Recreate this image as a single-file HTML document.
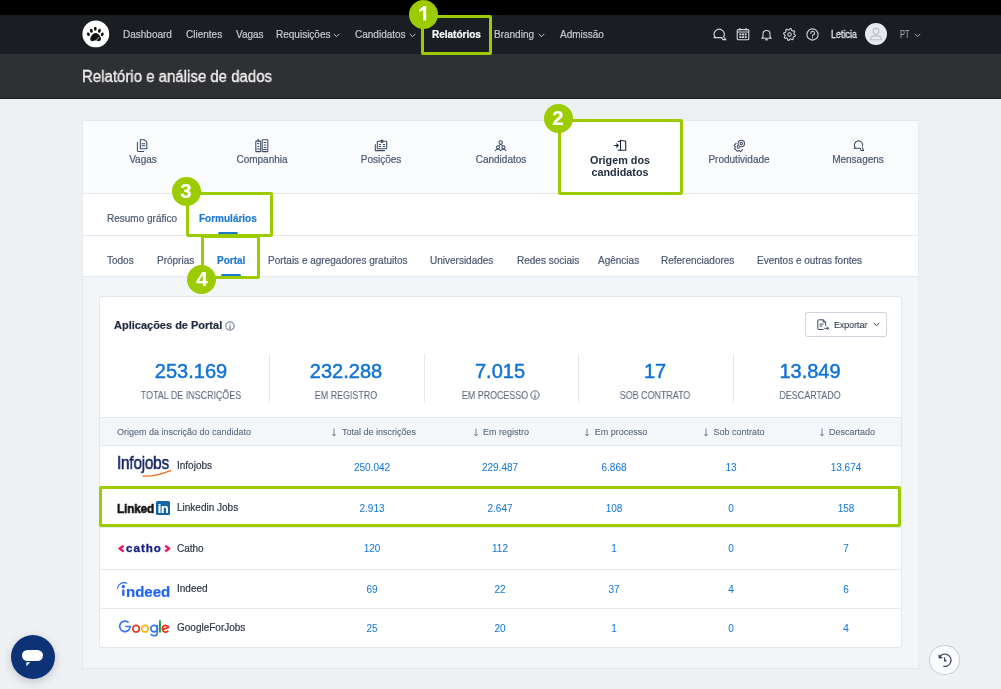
<!DOCTYPE html>
<html><head><meta charset="utf-8"><style>
html,body{margin:0;padding:0;}
body{width:1001px;height:689px;overflow:hidden;position:relative;background:#eef1f4;font-family:"Liberation Sans",sans-serif;}
.t{position:absolute;white-space:nowrap;line-height:1;will-change:transform;-webkit-text-stroke:0.2px currentColor;}
.b{position:absolute;}
svg.b{overflow:visible;}
</style></head><body>
<div class="b" style="left:0px;top:0px;width:1001px;height:15px;background:#000;"></div>
<div class="b" style="left:0px;top:15px;width:1001px;height:39px;background:#1a1e22;"></div>
<div class="b" style="left:0px;top:54px;width:1001px;height:44px;background:#2f3033;"></div>
<div class="b" style="left:0px;top:98px;width:1001px;height:1px;background:#1b1c1e;"></div>
<svg class="b" style="left:82px;top:20px" width="28" height="28" viewBox="0 0 28 28"><circle cx="13.8" cy="13.9" r="13.4" fill="#fff"/><g fill="#111"><ellipse cx="6.4" cy="14.2" rx="1.35" ry="1.85" transform="rotate(-30 6.4 14.2)"/><ellipse cx="9.35" cy="10.8" rx="1.45" ry="2.0" transform="rotate(-15 9.35 10.8)"/><ellipse cx="13.3" cy="8.8" rx="1.4" ry="2.05"/><ellipse cx="17.4" cy="10.8" rx="1.45" ry="2.0" transform="rotate(15 17.4 10.8)"/><ellipse cx="20.3" cy="14.4" rx="1.35" ry="1.85" transform="rotate(30 20.3 14.4)"/><path d="M13.4 13.1 C15.6 13.1 17.6 15 18.6 17.3 C19.4 19.2 18.9 21.2 16.9 21.2 C15.6 21.2 14.8 20.6 13.6 20.6 C12.2 20.6 11.3 21.4 10 21.3 C8.3 21.2 7.8 19.5 8.6 17.6 C9.5 15.3 11.3 13.1 13.4 13.1 Z"/></g><path d="M14.3 20.3 L16.8 17.6" stroke="#fff" stroke-width="0.7" stroke-linecap="round"/></svg>
<div class="t" style="left:123.0px;top:30.13px;font-size:10px;color:#c5c9cf;">Dashboard</div>
<div class="t" style="left:186.0px;top:30.13px;font-size:10px;color:#c5c9cf;">Clientes</div>
<div class="t" style="left:236.0px;top:30.13px;font-size:10px;color:#c5c9cf;">Vagas</div>
<div class="t" style="left:276.4px;top:30.13px;font-size:10px;color:#c5c9cf;">Requisições</div>
<div class="t" style="left:354.7px;top:30.13px;font-size:10px;color:#c5c9cf;">Candidatos</div>
<div class="t" style="left:431.5px;top:30.13px;font-size:10px;color:#ffffff;font-weight:700;">Relatórios</div>
<div class="t" style="left:494.2px;top:30.13px;font-size:10px;color:#c5c9cf;">Branding</div>
<div class="t" style="left:560.0px;top:30.13px;font-size:10px;color:#c5c9cf;">Admissão</div>
<svg class="b" style="left:333px;top:33px" width="7" height="5" viewBox="0 0 7 5"><path d="M1 1.2 L3.5 3.7 L6 1.2" fill="none" stroke="#c5c9cf" stroke-width="1" stroke-linecap="round" stroke-linejoin="round"/></svg>
<svg class="b" style="left:409.3px;top:33px" width="7" height="5" viewBox="0 0 7 5"><path d="M1 1.2 L3.5 3.7 L6 1.2" fill="none" stroke="#c5c9cf" stroke-width="1" stroke-linecap="round" stroke-linejoin="round"/></svg>
<svg class="b" style="left:538.3px;top:33px" width="7" height="5" viewBox="0 0 7 5"><path d="M1 1.2 L3.5 3.7 L6 1.2" fill="none" stroke="#c5c9cf" stroke-width="1" stroke-linecap="round" stroke-linejoin="round"/></svg>
<svg class="b" style="left:712px;top:27px" width="15" height="15" viewBox="0 0 15 15"><g fill="none" stroke="#d4d7dc" stroke-width="1.1" stroke-linecap="round"><path d="M3.2 10.3 A5 5 0 1 1 11.5 9.8"/><path d="M2 10.6 H9.8 L11 12.6 H13.8 L12.3 10.5"/></g></svg>
<svg class="b" style="left:736px;top:26.5px" width="14" height="14" viewBox="0 0 14 14"><g fill="none" stroke="#d4d7dc" stroke-width="1.1"><rect x="1.2" y="2.6" width="11.6" height="10.2" rx="1"/><path d="M4 1 V3.5 M10 1 V3.5 M1.2 5 H12.8"/></g><g fill="#d4d7dc"><rect x="3.3" y="6.5" width="2" height="1.8"/><rect x="6" y="6.5" width="2" height="1.8"/><rect x="8.7" y="6.5" width="2" height="1.8"/><rect x="3.3" y="9.2" width="2" height="1.8"/><rect x="6" y="9.2" width="2" height="1.8"/><rect x="8.7" y="9.2" width="2" height="1.8"/></g></svg>
<svg class="b" style="left:759.5px;top:27.5px" width="13" height="13" viewBox="0 0 13 13"><g fill="none" stroke="#d4d7dc" stroke-width="1.1" stroke-linejoin="round"><path d="M3 9 V6 A3.5 3.5 0 0 1 10 6 V9 L11.3 10.3 H1.7 Z"/><path d="M5 11.8 H8"/></g></svg>
<svg class="b" style="left:782.5px;top:27.5px" width="13" height="13" viewBox="0 0 13 13"><polygon points="12.37,7.09 12.14,8.22 10.55,8.68 10.05,9.42 10.23,11.07 9.27,11.71 7.83,10.90 6.94,11.08 5.91,12.37 4.78,12.14 4.32,10.55 3.58,10.05 1.93,10.23 1.29,9.27 2.10,7.83 1.92,6.94 0.63,5.91 0.86,4.78 2.45,4.32 2.95,3.58 2.77,1.93 3.73,1.29 5.17,2.10 6.06,1.92 7.09,0.63 8.22,0.86 8.68,2.45 9.42,2.95 11.07,2.77 11.71,3.73 10.90,5.17 11.08,6.06" fill="none" stroke="#d4d7dc" stroke-width="1.05" stroke-linejoin="round"/><circle cx="6.5" cy="6.5" r="1.7" fill="none" stroke="#d4d7dc" stroke-width="1.05"/></svg>
<svg class="b" style="left:806px;top:27.5px" width="13" height="13" viewBox="0 0 13 13"><circle cx="6.5" cy="6.5" r="5.6" fill="none" stroke="#d4d7dc" stroke-width="1.1"/><path d="M4.7 5.2 A1.9 1.9 0 1 1 7.2 7 C6.7 7.3 6.5 7.6 6.5 8.3" fill="none" stroke="#d4d7dc" stroke-width="1.1" stroke-linecap="round"/><circle cx="6.5" cy="9.9" r="0.7" fill="#d4d7dc"/></svg>
<div class="t" style="left:831.0px;top:30.13px;font-size:10px;color:#e6e8ec;transform-origin:0 50%;transform: scaleX(0.9);-webkit-text-stroke:0.3px #e6e8ec;">Leticia</div>
<svg class="b" style="left:864.7px;top:23.2px" width="22" height="22" viewBox="0 0 22 22"><circle cx="11" cy="11" r="11" fill="#e6e9ee"/><circle cx="11" cy="8.3" r="2.9" fill="none" stroke="#b9c0cb" stroke-width="1.1"/><path d="M5.3 16.8 C5.6 13.5 8 12.6 11 12.6 C14 12.6 16.4 13.5 16.7 16.8 Z" fill="none" stroke="#b9c0cb" stroke-width="1.1" stroke-linejoin="round"/></svg>
<div class="t" style="left:900.3px;top:30.13px;font-size:10px;color:#a3a8ae;transform-origin:0 50%;transform: scaleX(0.74);">PT</div>
<svg class="b" style="left:913.7px;top:33px" width="7" height="5" viewBox="0 0 7 5"><path d="M1 1.2 L3.5 3.7 L6 1.2" fill="none" stroke="#a3a8ae" stroke-width="1" stroke-linecap="round" stroke-linejoin="round"/></svg>
<div class="t" style="left:81.8px;top:68.65px;font-size:16px;color:#f4f4f4;transform-origin:0 50%;transform: scaleX(0.937);-webkit-text-stroke:0.3px #f4f4f4;">Relatório e análise de dados</div>
<div class="b" style="left:83px;top:121px;width:835px;height:547px;background:#f3f6f9;box-shadow:0 0 0 1px #e6eaef;"></div>
<div class="b" style="left:83px;top:121px;width:835px;height:72px;background:#fafbfc;"></div>
<div class="b" style="left:83px;top:193px;width:835px;height:1px;background:#e4e8ee;"></div>
<div class="b" style="left:83px;top:194px;width:835px;height:41px;background:#fff;"></div>
<div class="b" style="left:83px;top:235px;width:835px;height:1px;background:#e4e8ee;"></div>
<div class="b" style="left:83px;top:236px;width:835px;height:40px;background:#fff;"></div>
<div class="b" style="left:83px;top:276px;width:835px;height:1px;background:#e4e8ee;"></div>
<div class="b" style="left:561px;top:121px;width:119.3px;height:72px;background:#fff;"></div>
<div class="t" style="left:142.6px;top:155.13px;font-size:10px;color:#4b5873;transform:translateX(-50%);">Vagas</div>
<div class="t" style="left:261.9px;top:155.13px;font-size:10px;color:#4b5873;transform:translateX(-50%);">Companhia</div>
<div class="t" style="left:381.2px;top:155.13px;font-size:10px;color:#4b5873;transform:translateX(-50%);">Posições</div>
<div class="t" style="left:500.5px;top:155.13px;font-size:10px;color:#4b5873;transform:translateX(-50%);">Candidatos</div>
<div class="t" style="left:739.1px;top:155.13px;font-size:10px;color:#4b5873;transform:translateX(-50%);">Produtividade</div>
<div class="t" style="left:858.4px;top:155.13px;font-size:10px;color:#4b5873;transform:translateX(-50%);">Mensagens</div>
<div class="t" style="left:620.2px;top:154.86px;font-size:10.8px;color:#1f2a40;font-weight:700;transform:translateX(-50%);-webkit-text-stroke:0px;">Origem dos</div>
<div class="t" style="left:620.2px;top:166.56px;font-size:10.8px;color:#1f2a40;font-weight:700;transform:translateX(-50%);-webkit-text-stroke:0px;">candidatos</div>
<svg class="b" style="left:134px;top:136px" width="18" height="18" viewBox="0 0 18 18"><g fill="none" stroke="#3d4a63" stroke-width="1.05" stroke-linecap="round" stroke-linejoin="round"><path d="M3.4 6.3 V14.6 Q3.4 15.4 4.2 15.4 H9.7"/><path d="M6.3 3.8 H10.4 L12.8 6.2 V12.7 H6.3 Z"/><path d="M8 7.7 H10.9 M8 9.7 H10.9"/></g></svg>
<svg class="b" style="left:252px;top:136px" width="18" height="18" viewBox="0 0 18 18"><g fill="none" stroke="#3d4a63" stroke-width="1.05" stroke-linecap="round" stroke-linejoin="round"><rect x="3.8" y="5.1" width="4.9" height="10.5" rx="0.6"/><path d="M6.25 3.3 V5.1"/><rect x="10.2" y="3.8" width="5.6" height="11.8" rx="0.6"/><path d="M5.6 7.6 H6.8 M5.6 10.5 H6.8 M12.2 6.4 H13.8 M12.2 9 H13.8 M12.2 11.5 H13.8 M5 13 H7.5 M11.5 13.5 H14.5"/></g></svg>
<svg class="b" style="left:371px;top:136px" width="18" height="18" viewBox="0 0 18 18"><g fill="none" stroke="#3d4a63" stroke-width="1.05" stroke-linecap="round" stroke-linejoin="round"><path d="M4.3 8.4 V14.6 H13.6"/><rect x="6.3" y="5.3" width="9.4" height="7.5" rx="0.8"/><circle cx="11" cy="5.3" r="1.2"/><path d="M8.4 8.4 H9.6 M12.3 8.4 H13.7 M8.4 10.4 H9.8 M12.3 10.4 H13.7"/></g></svg>
<svg class="b" style="left:491px;top:136px" width="18" height="18" viewBox="0 0 18 18"><g fill="none" stroke="#3d4a63" stroke-width="1.05" stroke-linecap="round" stroke-linejoin="round"><circle cx="9.7" cy="6.5" r="1.7"/><path d="M8 9.4 L9.7 8.4 L11.4 9.4"/><circle cx="7" cy="11.3" r="1.5"/><circle cx="12.4" cy="11.3" r="1.5"/><path d="M4.3 14.8 Q5 13.2 7 13.2 Q9 13.2 9.7 14.8 Q10.4 13.2 12.4 13.2 Q14.4 13.2 15 14.8"/></g></svg>
<svg class="b" style="left:611px;top:136px" width="18" height="18" viewBox="0 0 18 18"><g fill="none" stroke="#1f2a40" stroke-width="1.1" stroke-linecap="round" stroke-linejoin="round"><path d="M7.2 5.5 H9.5 M7.2 14.3 H9.5"/><path d="M9.5 4.2 L14.7 5.3 V14.3 H9.5 Z"/><path d="M3.3 9.5 H7.3 M5.6 7.8 L7.3 9.5 L5.6 11.2"/></g></svg>
<svg class="b" style="left:730px;top:136px" width="18" height="18" viewBox="0 0 18 18"><g fill="none" stroke="#3d4a63" stroke-width="1.05" stroke-linecap="round" stroke-linejoin="round"><circle cx="11.3" cy="7.5" r="3.2"/><circle cx="11.3" cy="7.5" r="1.2"/><path d="M6.2 7.2 L4.2 9.3 L5.4 10.8 L4.6 12.6 L7.4 15.3 L9.3 14.5 L10.7 15.6 L12.6 13.7"/><path d="M7.4 9.5 V12 H9.8"/></g></svg>
<svg class="b" style="left:849px;top:136px" width="18" height="18" viewBox="0 0 18 18"><g fill="none" stroke="#3d4a63" stroke-width="1.05" stroke-linecap="round" stroke-linejoin="round"><path d="M6.2 11.6 A4.2 4.2 0 1 1 13.6 10.2"/><path d="M5 12.3 H11 L12.2 14.4 H14.6 L13.3 11.8"/></g></svg>
<div class="t" style="left:107.4px;top:213.93px;font-size:10px;color:#4b5873;">Resumo gráfico</div>
<div class="t" style="left:199.2px;top:214.03px;font-size:10px;color:#1d7ad0;font-weight:700;">Formulários</div>
<div class="b" style="left:218px;top:232.3px;width:20px;height:2.7px;background:#1d7ad0;border-radius:2px;"></div>
<div class="t" style="left:107.0px;top:255.93px;font-size:10px;color:#4b5873;">Todos</div>
<div class="t" style="left:156.6px;top:255.93px;font-size:10px;color:#4b5873;">Próprias</div>
<div class="t" style="left:216.7px;top:255.93px;font-size:10px;color:#1d7ad0;font-weight:700;">Portal</div>
<div class="t" style="left:268.2px;top:255.93px;font-size:10px;color:#4b5873;">Portais e agregadores gratuitos</div>
<div class="t" style="left:430.1px;top:255.93px;font-size:10px;color:#4b5873;">Universidades</div>
<div class="t" style="left:516.5px;top:255.93px;font-size:10px;color:#4b5873;">Redes sociais</div>
<div class="t" style="left:598.3px;top:255.93px;font-size:10px;color:#4b5873;">Agências</div>
<div class="t" style="left:661.3px;top:255.93px;font-size:10px;color:#4b5873;">Referenciadores</div>
<div class="t" style="left:756.8px;top:255.93px;font-size:10px;color:#4b5873;">Eventos e outras fontes</div>
<div class="b" style="left:221.3px;top:274.3px;width:19.8px;height:2.5px;background:#1d7ad0;border-radius:2px;"></div>
<div class="b" style="left:100px;top:297px;width:801px;height:350px;background:#fff;box-shadow:0 0 0 1px #e3e8ee;border-radius:2px;"></div>
<div class="t" style="left:114.3px;top:320.09px;font-size:11px;color:#1f2a40;font-weight:700;">Aplicações de Portal</div>
<svg class="b" style="left:225px;top:320.5px" width="10" height="10" viewBox="0 0 10 10"><circle cx="5" cy="5" r="4.2" fill="none" stroke="#4b5873" stroke-width="0.9"/><path d="M5 4.4 V7.2 M4.2 7.2 H5.8" stroke="#4b5873" stroke-width="0.9" fill="none"/><circle cx="5" cy="3" r="0.6" fill="#4b5873"/></svg>
<div class="b" style="left:805.3px;top:312px;width:81.6px;height:24.8px;background:#fff;box-shadow:inset 0 0 0 1px #cfd6df;border-radius:3px;"></div>
<svg class="b" style="left:816.5px;top:318.5px" width="13" height="12" viewBox="0 0 13 12"><g fill="none" stroke="#3d4a63" stroke-width="1" stroke-linecap="round" stroke-linejoin="round"><path d="M8.6 6.3 V3.1 L6.3 0.8 H1.9 Q0.8 0.8 0.8 1.9 V9.4 Q0.8 10.5 1.9 10.5 H6.2"/><path d="M6.2 0.9 V3.1 H8.5"/><path d="M2.9 5.1 H6 M2.9 7.1 H4.8"/><path d="M7.6 9.3 H11.5 M10.1 7.9 L11.5 9.3 L10.1 10.7"/></g></svg>
<div class="t" style="left:834.0px;top:319.96px;font-size:9.5px;color:#2f3746;transform-origin:0 50%;transform: scaleX(0.93);-webkit-text-stroke:0.1px currentColor;">Exportar</div>
<svg class="b" style="left:872.5px;top:322.2px" width="7" height="5" viewBox="0 0 7 5"><path d="M1 1.2 L3.5 3.7 L6 1.2" fill="none" stroke="#2f3746" stroke-width="1.0" stroke-linecap="round" stroke-linejoin="round"/></svg>
<div class="t" style="left:190.5px;top:360.67px;font-size:20px;color:#0f73d6;transform:translateX(-50%);-webkit-text-stroke:0.45px #0f73d6;">253.169</div>
<div class="t" style="left:345.9px;top:360.67px;font-size:20px;color:#0f73d6;transform:translateX(-50%);-webkit-text-stroke:0.45px #0f73d6;">232.288</div>
<div class="t" style="left:500.2px;top:360.67px;font-size:20px;color:#0f73d6;transform:translateX(-50%);-webkit-text-stroke:0.45px #0f73d6;">7.015</div>
<div class="t" style="left:655.2px;top:360.67px;font-size:20px;color:#0f73d6;transform:translateX(-50%);-webkit-text-stroke:0.45px #0f73d6;">17</div>
<div class="t" style="left:810.0px;top:360.67px;font-size:20px;color:#0f73d6;transform:translateX(-50%);-webkit-text-stroke:0.45px #0f73d6;">13.849</div>
<div class="t" style="left:190.5px;top:390.11px;font-size:10.5px;color:#5a667a;transform-origin:50% 50%;transform:translateX(-50%) scaleX(0.85);-webkit-text-stroke:0.05px currentColor;">TOTAL DE INSCRIÇÕES</div>
<div class="t" style="left:345.9px;top:390.11px;font-size:10.5px;color:#5a667a;transform-origin:50% 50%;transform:translateX(-50%) scaleX(0.85);-webkit-text-stroke:0.05px currentColor;">EM REGISTRO</div>
<div class="t" style="left:494.7px;top:390.11px;font-size:10.5px;color:#5a667a;transform-origin:50% 50%;transform:translateX(-50%) scaleX(0.85);-webkit-text-stroke:0.05px currentColor;">EM PROCESSO</div>
<div class="t" style="left:655.2px;top:390.11px;font-size:10.5px;color:#5a667a;transform-origin:50% 50%;transform:translateX(-50%) scaleX(0.85);-webkit-text-stroke:0.05px currentColor;">SOB CONTRATO</div>
<div class="t" style="left:810.0px;top:390.11px;font-size:10.5px;color:#5a667a;transform-origin:50% 50%;transform:translateX(-50%) scaleX(0.85);-webkit-text-stroke:0.05px currentColor;">DESCARTADO</div>
<svg class="b" style="left:529.5px;top:389.5px" width="10" height="10" viewBox="0 0 10 10"><circle cx="5" cy="5" r="4.2" fill="none" stroke="#4b5873" stroke-width="0.9"/><path d="M5 4.4 V7.2 M4.2 7.2 H5.8" stroke="#4b5873" stroke-width="0.9" fill="none"/><circle cx="5" cy="3" r="0.6" fill="#4b5873"/></svg>
<div class="b" style="left:268.6px;top:354px;width:1px;height:48.5px;background:#e6eaef;"></div>
<div class="b" style="left:423.6px;top:354px;width:1px;height:48.5px;background:#e6eaef;"></div>
<div class="b" style="left:577.8px;top:354px;width:1px;height:48.5px;background:#e6eaef;"></div>
<div class="b" style="left:732.6px;top:354px;width:1px;height:48.5px;background:#e6eaef;"></div>
<div class="b" style="left:100px;top:417px;width:801px;height:28.5px;background:#f4f7fa;"></div>
<div class="b" style="left:100px;top:417px;width:801px;height:1px;background:#e6eaef;"></div>
<div class="b" style="left:100px;top:445px;width:801px;height:1px;background:#e3e8ee;"></div>
<div class="t" style="left:117.3px;top:427.98px;font-size:9px;color:#5b6880;-webkit-text-stroke:0.1px currentColor;">Origem da inscrição do candidato</div>
<div class="t" style="left:378.5px;top:427.98px;font-size:9px;color:#5b6880;transform:translateX(-50%);-webkit-text-stroke:0.1px currentColor;">Total de inscrições</div>
<div class="t" style="left:506.0px;top:427.98px;font-size:9px;color:#5b6880;transform:translateX(-50%);-webkit-text-stroke:0.1px currentColor;">Em registro</div>
<div class="t" style="left:620.5px;top:427.98px;font-size:9px;color:#5b6880;transform:translateX(-50%);-webkit-text-stroke:0.1px currentColor;">Em processo</div>
<div class="t" style="left:738.5px;top:427.98px;font-size:9px;color:#5b6880;transform:translateX(-50%);-webkit-text-stroke:0.1px currentColor;">Sob contrato</div>
<div class="t" style="left:852.0px;top:427.98px;font-size:9px;color:#5b6880;transform:translateX(-50%);-webkit-text-stroke:0.1px currentColor;">Descartado</div>
<svg class="b" style="left:331.0px;top:427.5px" width="6" height="10" viewBox="0 0 6 10"><path d="M3 1 V7.8 M1.6 6.3 L3 7.9 L4.4 6.3" fill="none" stroke="#5b6880" stroke-width="0.8" stroke-linecap="round" stroke-linejoin="round"/></svg>
<svg class="b" style="left:472.5px;top:427.5px" width="6" height="10" viewBox="0 0 6 10"><path d="M3 1 V7.8 M1.6 6.3 L3 7.9 L4.4 6.3" fill="none" stroke="#5b6880" stroke-width="0.8" stroke-linecap="round" stroke-linejoin="round"/></svg>
<svg class="b" style="left:583.75px;top:427.5px" width="6" height="10" viewBox="0 0 6 10"><path d="M3 1 V7.8 M1.6 6.3 L3 7.9 L4.4 6.3" fill="none" stroke="#5b6880" stroke-width="0.8" stroke-linecap="round" stroke-linejoin="round"/></svg>
<svg class="b" style="left:702.5px;top:427.5px" width="6" height="10" viewBox="0 0 6 10"><path d="M3 1 V7.8 M1.6 6.3 L3 7.9 L4.4 6.3" fill="none" stroke="#5b6880" stroke-width="0.8" stroke-linecap="round" stroke-linejoin="round"/></svg>
<svg class="b" style="left:818.5px;top:427.5px" width="6" height="10" viewBox="0 0 6 10"><path d="M3 1 V7.8 M1.6 6.3 L3 7.9 L4.4 6.3" fill="none" stroke="#5b6880" stroke-width="0.8" stroke-linecap="round" stroke-linejoin="round"/></svg>
<div class="b" style="left:100px;top:486.4px;width:801px;height:1px;background:#e6eaef;"></div>
<div class="b" style="left:100px;top:527px;width:801px;height:1px;background:#e6eaef;"></div>
<div class="b" style="left:100px;top:568.5px;width:801px;height:1px;background:#e6eaef;"></div>
<div class="b" style="left:100px;top:608.4px;width:801px;height:1px;background:#e6eaef;"></div>
<div class="t" style="left:176.7px;top:461.33px;font-size:10px;color:#2f3746;">Infojobs</div>
<div class="t" style="left:372.0px;top:463.13px;font-size:10px;color:#1679d9;transform:translateX(-50%);-webkit-text-stroke:0.05px currentColor;">250.042</div>
<div class="t" style="left:499.5px;top:463.13px;font-size:10px;color:#1679d9;transform:translateX(-50%);-webkit-text-stroke:0.05px currentColor;">229.487</div>
<div class="t" style="left:613.5px;top:463.13px;font-size:10px;color:#1679d9;transform:translateX(-50%);-webkit-text-stroke:0.05px currentColor;">6.868</div>
<div class="t" style="left:731.0px;top:463.13px;font-size:10px;color:#1679d9;transform:translateX(-50%);-webkit-text-stroke:0.05px currentColor;">13</div>
<div class="t" style="left:845.5px;top:463.13px;font-size:10px;color:#1679d9;transform:translateX(-50%);-webkit-text-stroke:0.05px currentColor;">13.674</div>
<div class="t" style="left:176.7px;top:502.93px;font-size:10px;color:#2f3746;">Linkedin Jobs</div>
<div class="t" style="left:372.0px;top:504.03px;font-size:10px;color:#1679d9;transform:translateX(-50%);-webkit-text-stroke:0.05px currentColor;">2.913</div>
<div class="t" style="left:499.5px;top:504.03px;font-size:10px;color:#1679d9;transform:translateX(-50%);-webkit-text-stroke:0.05px currentColor;">2.647</div>
<div class="t" style="left:613.5px;top:504.03px;font-size:10px;color:#1679d9;transform:translateX(-50%);-webkit-text-stroke:0.05px currentColor;">108</div>
<div class="t" style="left:731.0px;top:504.03px;font-size:10px;color:#1679d9;transform:translateX(-50%);-webkit-text-stroke:0.05px currentColor;">0</div>
<div class="t" style="left:845.5px;top:504.03px;font-size:10px;color:#1679d9;transform:translateX(-50%);-webkit-text-stroke:0.05px currentColor;">158</div>
<div class="t" style="left:176.7px;top:543.73px;font-size:10px;color:#2f3746;">Catho</div>
<div class="t" style="left:372.0px;top:544.43px;font-size:10px;color:#1679d9;transform:translateX(-50%);-webkit-text-stroke:0.05px currentColor;">120</div>
<div class="t" style="left:499.5px;top:544.43px;font-size:10px;color:#1679d9;transform:translateX(-50%);-webkit-text-stroke:0.05px currentColor;">112</div>
<div class="t" style="left:613.5px;top:544.43px;font-size:10px;color:#1679d9;transform:translateX(-50%);-webkit-text-stroke:0.05px currentColor;">1</div>
<div class="t" style="left:731.0px;top:544.43px;font-size:10px;color:#1679d9;transform:translateX(-50%);-webkit-text-stroke:0.05px currentColor;">0</div>
<div class="t" style="left:845.5px;top:544.43px;font-size:10px;color:#1679d9;transform:translateX(-50%);-webkit-text-stroke:0.05px currentColor;">7</div>
<div class="t" style="left:176.7px;top:584.03px;font-size:10px;color:#2f3746;">Indeed</div>
<div class="t" style="left:372.0px;top:585.13px;font-size:10px;color:#1679d9;transform:translateX(-50%);-webkit-text-stroke:0.05px currentColor;">69</div>
<div class="t" style="left:499.5px;top:585.13px;font-size:10px;color:#1679d9;transform:translateX(-50%);-webkit-text-stroke:0.05px currentColor;">22</div>
<div class="t" style="left:613.5px;top:585.13px;font-size:10px;color:#1679d9;transform:translateX(-50%);-webkit-text-stroke:0.05px currentColor;">37</div>
<div class="t" style="left:731.0px;top:585.13px;font-size:10px;color:#1679d9;transform:translateX(-50%);-webkit-text-stroke:0.05px currentColor;">4</div>
<div class="t" style="left:845.5px;top:585.13px;font-size:10px;color:#1679d9;transform:translateX(-50%);-webkit-text-stroke:0.05px currentColor;">6</div>
<div class="t" style="left:176.7px;top:622.83px;font-size:10px;color:#2f3746;">GoogleForJobs</div>
<div class="t" style="left:372.0px;top:623.93px;font-size:10px;color:#1679d9;transform:translateX(-50%);-webkit-text-stroke:0.05px currentColor;">25</div>
<div class="t" style="left:499.5px;top:623.93px;font-size:10px;color:#1679d9;transform:translateX(-50%);-webkit-text-stroke:0.05px currentColor;">20</div>
<div class="t" style="left:613.5px;top:623.93px;font-size:10px;color:#1679d9;transform:translateX(-50%);-webkit-text-stroke:0.05px currentColor;">1</div>
<div class="t" style="left:731.0px;top:623.93px;font-size:10px;color:#1679d9;transform:translateX(-50%);-webkit-text-stroke:0.05px currentColor;">0</div>
<div class="t" style="left:845.5px;top:623.93px;font-size:10px;color:#1679d9;transform:translateX(-50%);-webkit-text-stroke:0.05px currentColor;">4</div>
<div class="t" style="left:117.1px;top:454.06px;font-size:18px;color:#0f1f5c;transform-origin:0 50%;transform: scaleX(0.845);letter-spacing:-0.2px;-webkit-text-stroke:0.5px #0f1f5c;">Infojobs</div>
<svg class="b" style="left:140px;top:468px" width="33" height="10" viewBox="0 0 33 10"><path d="M3 8.2 Q16 8.6 30.5 2.6" fill="none" stroke="#f26b21" stroke-width="1.2" stroke-linecap="round"/></svg>
<div class="t" style="left:117.2px;top:501.77px;font-size:13.5px;color:#111;font-weight:700;transform-origin:0 50%;transform: scaleX(0.88);letter-spacing:-0.25px;-webkit-text-stroke:0.55px #111;">Linked</div>
<div class="b" style="left:156.4px;top:500.9px;width:13.9px;height:13.8px;background:#1266a6;border-radius:1.5px;"></div>
<div class="t" style="left:163.3px;top:503.32px;font-size:12.5px;color:#fff;font-weight:700;transform:translateX(-50%);letter-spacing:-0.3px;">in</div>
<svg class="b" style="left:117.8px;top:544.8px" width="7" height="8" viewBox="0 0 7 8"><path d="M5.6 0.8 L1.6 3.6 L5.6 6.4" fill="none" stroke="#ef1b67" stroke-width="2.5" stroke-linejoin="round" stroke-linecap="butt"/></svg>
<div class="t" style="left:126.2px;top:541.68px;font-size:11.6px;color:#1c1f87;font-weight:700;transform-origin:0 50%;transform: scaleX(1.0);letter-spacing:1.0px;-webkit-text-stroke:0.35px #1c1f87;">catho</div>
<svg class="b" style="left:163.8px;top:544.8px" width="7" height="8" viewBox="0 0 7 8"><path d="M1.2 0.8 L5.2 3.6 L1.2 6.4" fill="none" stroke="#ef1b67" stroke-width="2.5" stroke-linejoin="round" stroke-linecap="butt"/></svg>
<div class="t" style="left:125.6px;top:583.80px;font-size:15px;color:#2164f3;font-weight:700;letter-spacing:0px;-webkit-text-stroke:0.2px #2164f3;">ndeed</div>
<svg class="b" style="left:112px;top:578px" width="20" height="20" viewBox="0 0 20 20"><path d="M5.4 10.4 A6.6 6.6 0 0 1 14.8 5.3" fill="none" stroke="#2164f3" stroke-width="1.1" stroke-linecap="round"/><circle cx="11.35" cy="8.6" r="1.6" fill="#2164f3"/><rect x="10.15" y="11.6" width="2.3" height="6.3" fill="#2164f3"/></svg>
<svg class="b" style="left:116px;top:616px" width="56" height="22" viewBox="0 0 56 22"><g fill="none" stroke-width="1.7"><path d="M14.15 10.45 A5.25 5.25 0 1 1 12.6 6.6" stroke="#3578f2"/><path d="M9.2 10.45 H14.95" stroke="#3578f2" stroke-width="1.5"/><circle cx="20.05" cy="12.7" r="3.3" stroke="#e8341f"/><circle cx="29" cy="12.7" r="3.3" stroke="#f9b50a"/><circle cx="38.1" cy="12.6" r="3.3" stroke="#3578f2"/><path d="M41.3 9.1 V16.9 Q41.3 19.75 38.1 19.75 Q35.8 19.75 34.7 18.3" stroke="#3578f2"/><path d="M43.95 4.3 V16.6" stroke="#21a04a" stroke-width="1.9"/><path d="M46.5 13.6 L52.6 11.3 A3.3 3.3 0 1 0 52.3 14.7" stroke="#e8341f"/></g></svg>
<div class="b" style="left:421px;top:15px;width:71px;height:40px;background:transparent;box-shadow:inset 0 0 0 3px #9ccb00;border-radius:2px;"></div>
<div class="b" style="left:409.0px;top:-0.5px;width:29px;height:29px;border-radius:50%;background:#9ccb00;"></div>
<svg class="b" style="left:419.00px;top:6.30px" width="8" height="15" viewBox="0 0 8 15"><path d="M4.3 0 H7.2 V14.5 H4.2 V3.9 C3.2 4.8 1.8 5.4 0.2 5.8 V3.1 C2 2.6 3.4 1.6 4.3 0 Z" fill="#fff"/></svg>
<div class="b" style="left:558px;top:118.7px;width:125.10000000000002px;height:75.99999999999999px;background:transparent;box-shadow:inset 0 0 0 3px #9ccb00;border-radius:2px;"></div>
<div class="b" style="left:543.8px;top:103.8px;width:29px;height:29px;border-radius:50%;background:#9ccb00;"></div>
<div class="t" style="left:558.3px;top:108.14px;font-size:20.5px;color:#fff;font-weight:700;transform:translateX(-50%);">2</div>
<div class="b" style="left:186.4px;top:192.3px;width:86.4px;height:45.19999999999999px;background:transparent;box-shadow:inset 0 0 0 3px #9ccb00;border-radius:2px;"></div>
<div class="b" style="left:171.7px;top:176.7px;width:29px;height:29px;border-radius:50%;background:#9ccb00;"></div>
<div class="t" style="left:186.2px;top:181.04px;font-size:20.5px;color:#fff;font-weight:700;transform:translateX(-50%);">3</div>
<div class="b" style="left:201.1px;top:235px;width:59.29999999999998px;height:44px;background:transparent;box-shadow:inset 0 0 0 3px #9ccb00;border-radius:2px;"></div>
<div class="b" style="left:187.3px;top:265.0px;width:29px;height:29px;border-radius:50%;background:#9ccb00;"></div>
<div class="t" style="left:201.8px;top:269.34px;font-size:20.5px;color:#fff;font-weight:700;transform:translateX(-50%);">4</div>
<div class="b" style="left:99px;top:486.3px;width:802.1px;height:40.30000000000001px;background:transparent;box-shadow:inset 0 0 0 3px #9ccb00;border-radius:2px;"></div>
<div class="b" style="left:10.8px;top:634.5px;width:44px;height:44px;border-radius:50%;background:#0d3275;box-shadow:0 3px 10px rgba(20,30,50,0.2);"></div>
<div class="b" style="left:22.2px;top:649.6px;width:21.1px;height:11.4px;background:#fff;border-radius:5.7px;"></div>
<svg class="b" style="left:25.8px;top:662.2px" width="5" height="5" viewBox="0 0 5 5"><path d="M0.4 4.2 L0.4 0.3 L4.3 0.3 Z" fill="#fff"/></svg>
<div class="b" style="left:929.3px;top:644.8px;width:30.5px;height:30.5px;border-radius:50%;background:#fafbfc;box-shadow:inset 0 0 0 1px #c5ccd6;"></div>
<svg class="b" style="left:937px;top:652.5px" width="15" height="15" viewBox="0 0 15 15"><g fill="none" stroke="#2c3a55" stroke-width="1.25" stroke-linecap="round" stroke-linejoin="round"><path d="M2.8 3.9 A6.1 6.1 0 1 1 6.8 13.25"/><path d="M2.1 2.1 L2.3 4.8 L5 4.6"/><path d="M7.7 4.9 V7.9 H9.2"/></g></svg>
</body></html>
